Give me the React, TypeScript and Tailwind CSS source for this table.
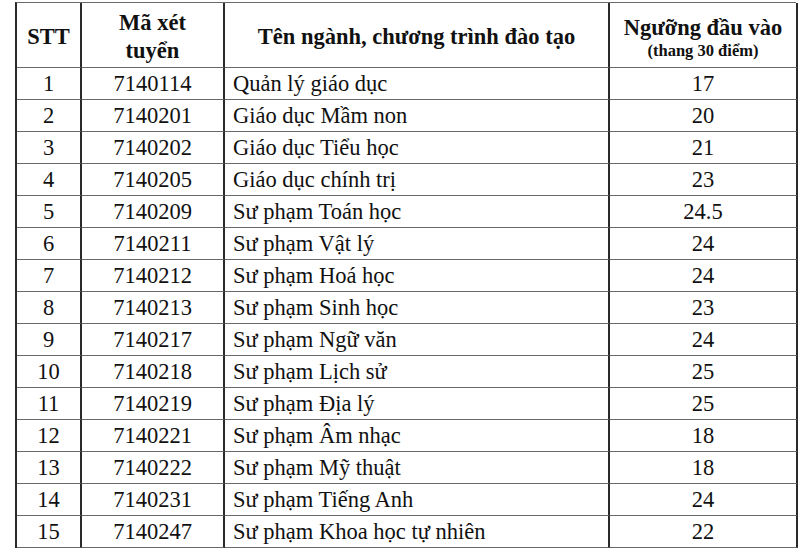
import React from "react";

const rows: [string, string, string, string][] = [
  ["1", "7140114", "Quản lý giáo dục", "17"],
  ["2", "7140201", "Giáo dục Mầm non", "20"],
  ["3", "7140202", "Giáo dục Tiểu học", "21"],
  ["4", "7140205", "Giáo dục chính trị", "23"],
  ["5", "7140209", "Sư phạm Toán học", "24.5"],
  ["6", "7140211", "Sư phạm Vật lý", "24"],
  ["7", "7140212", "Sư phạm Hoá học", "24"],
  ["8", "7140213", "Sư phạm Sinh học", "23"],
  ["9", "7140217", "Sư phạm Ngữ văn", "24"],
  ["10", "7140218", "Sư phạm Lịch sử", "25"],
  ["11", "7140219", "Sư phạm Địa lý", "25"],
  ["12", "7140221", "Sư phạm Âm nhạc", "18"],
  ["13", "7140222", "Sư phạm Mỹ thuật", "18"],
  ["14", "7140231", "Sư phạm Tiếng Anh", "24"],
  ["15", "7140247", "Sư phạm Khoa học tự nhiên", "22"],
];

const cell =
  "border-r-2 border-b-[1.5px] border-r-[#2a2a2a] border-b-[#6a6a6a] flex items-center";

export default function App() {
  return (
    <div className="w-[800px] h-[551px] bg-white pt-[2px] pl-[15px] text-[#111111] font-['Liberation_Serif','Times_New_Roman',serif]">
      <div className="w-[781px] border-l-2 border-t-[1.5px] border-l-[#2a2a2a] border-t-[#6a6a6a] grid grid-cols-[65px_143px_385px_188px] text-[22.5px] leading-none">
        <div className={`${cell} h-[65px] justify-center font-bold pt-[4px]`}>STT</div>
        <div className={`${cell} h-[65px] justify-center font-bold flex-col leading-[28px] text-center pt-[4px]`}>
          <span>Mã xét</span>
          <span>tuyển</span>
        </div>
        <div className={`${cell} h-[65px] justify-center font-bold pt-[4px]`}>
          Tên ngành, chương trình đào tạo
        </div>
        <div className={`${cell} h-[65px] justify-center font-bold flex-col text-center pt-[5px]`}>
          <span className="leading-[27px]">Ngưỡng đầu vào</span>
          <span className="text-[16.5px] leading-[20px]">(thang 30 điểm)</span>
        </div>
        {rows.map((r) => (
          <React.Fragment key={r[0]}>
            <div className={`${cell} h-[32px] justify-center pt-[2px]`}>{r[0]}</div>
            <div className={`${cell} h-[32px] justify-center pt-[2px]`}>{r[1]}</div>
            <div className={`${cell} h-[32px] pl-[8px] pt-[2px]`}>{r[2]}</div>
            <div className={`${cell} h-[32px] justify-center pt-[2px]`}>{r[3]}</div>
          </React.Fragment>
        ))}
      </div>
    </div>
  );
}
